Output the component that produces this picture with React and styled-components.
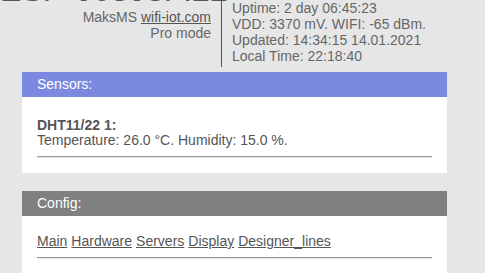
import styled, { createGlobalStyle } from "styled-components";

const Global = createGlobalStyle`
  html, body {
    margin: 0;
    padding: 0;
    background: #e6e6e6;
    font-family: "Liberation Sans", Arial, sans-serif;
    font-size: 14px;
    color: #555;
    overflow: hidden;
  }
`;

const Header = styled.header`
  display: flex;
  margin-top: -23px;
`;

const Brand = styled.div`
  width: 211px;
  padding-right: 10px;
  border-right: 1px solid #555;
  text-align: right;
  color: #666;
  line-height: 16px;
`;

const Title = styled.div`
  font-size: 32px;
  line-height: 28px;
  margin: -1px 0 5px;
  color: #555;
  white-space: nowrap;
`;

const Link = styled.a`
  color: #555;
  text-decoration: underline;
`;

const Status = styled.div`
  padding: 23px 0 3px 10px;
  line-height: 16px;
  color: #666;
`;

const Card = styled.section`
  width: 425px;
  margin: ${(p) => p.$top}px 0 0 22px;
  background: #fff;
`;

const CardHead = styled.div`
  height: 25px;
  line-height: 25px;
  padding-left: 15px;
  color: #fff;
  background: ${(p) => p.$color};
`;

const CardBody = styled.div`
  padding: 15px;
  line-height: 16px;
`;

const Sensor = styled.div`
  margin-top: 6px;
  line-height: 15px;
  b {
    color: #555;
  }
`;

const Rule = styled.hr`
  margin: 8px 0 0;
  border: 0;
  border-top: 1px solid #999;
  border-bottom: 1px solid #e4e4e4;
`;

const Menu = styled.div`
  display: flex;
  gap: 4px;
  padding-top: 2px;
`;

export default function App() {
  return (
    <>
      <Global />
      <Header>
        <Brand>
          <Title>ESP-06303F:22</Title>
          <div>
            MaksMS <Link href="#">wifi-iot.com</Link>
          </div>
          <div>Pro mode</div>
        </Brand>
        <Status>
          <div>Uptime: 2 day 06:45:23</div>
          <div>VDD: 3370 mV. WIFI: -65 dBm.</div>
          <div>Updated: 14:34:15 14.01.2021</div>
          <div>Local Time: 22:18:40</div>
        </Status>
      </Header>

      <Card $top={5}>
        <CardHead $color="#7b8ae0">Sensors:</CardHead>
        <CardBody>
          <Sensor>
            <b>DHT11/22 1:</b>
            <br />
            Temperature: 26.0 °C. Humidity: 15.0 %.
          </Sensor>
          <Rule />
        </CardBody>
      </Card>

      <Card $top={18}>
        <CardHead $color="#808080">Config:</CardHead>
        <CardBody>
          <Menu>
            {["Main", "Hardware", "Servers", "Display", "Designer_lines"].map((m) => (
              <Link key={m} href="#">
                {m}
              </Link>
            ))}
          </Menu>
          <Rule />
        </CardBody>
      </Card>
    </>
  );
}
